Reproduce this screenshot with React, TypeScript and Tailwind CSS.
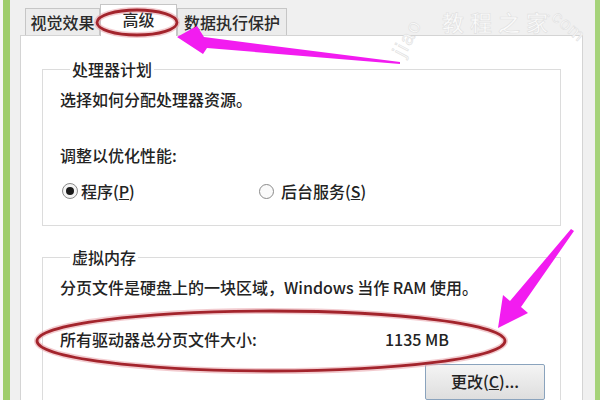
export default function App() {
  return (
    <div className="relative w-[600px] h-[400px] overflow-hidden bg-[#f0f0f0] flex font-['Noto_Sans_CJK_SC',sans-serif] font-medium text-[16px] leading-[20px] text-[#232323]">
      <div className="w-[3px] bg-[#f6f6f6]" />
      <div className="w-[7px] bg-[#9fcd6b]" />
      <div className="flex-1 flex flex-col pl-[10px] pr-[12px] pt-[4px] min-w-0">
        {/* tabs */}
        <div className="h-[32px] flex items-end pl-[5px] relative z-10">
          <div className="w-[75px] h-[27px] border border-b-0 border-[#c6c6c6] bg-[#ececec] flex items-center justify-center text-[#2a2a2a]">
            视觉效果
          </div>
          <div className="w-[77px] h-[32px] -mb-px border border-b-0 border-[#c6c6c6] bg-white flex items-center justify-center pb-[4px] text-[#2a2a2a]">
            高级
          </div>
          <div className="w-[110px] h-[27px] border border-b-0 border-[#c6c6c6] bg-[#ececec] flex items-center justify-center text-[#2a2a2a]">
            数据执行保护
          </div>
        </div>
        {/* panel */}
        <div className="flex-1 bg-white border border-b-0 border-[#d4d4d4] px-[21px] flex flex-col">
          <fieldset className="mt-[23px] border border-[#dcdcdc] px-[17px] pb-[24px]">
            <legend className="ml-[10px] px-[2px]">处理器计划</legend>
            <div className="mt-[10px]">选择如何分配处理器资源。</div>
            <div className="mt-[36px]">调整以优化性能:</div>
            <div className="mt-[16px] flex items-center">
              <div className="w-[199px] flex items-center pl-[2px]">
                <div className="w-[16px] h-[16px] rounded-full border border-[#8a8a8a] bg-[#f4f4f4] flex items-center justify-center">
                  <div className="w-[8px] h-[8px] rounded-full bg-[#1a1a1a]" />
                </div>
                <span className="ml-[3px]">
                  程序(<span className="underline">P</span>)
                </span>
              </div>
              <div className="flex items-center">
                <div className="w-[15px] h-[15px] rounded-full border border-[#8a8a8a] bg-[#fafafa]" />
                <span className="ml-[7px]">
                  后台服务(<span className="underline">S</span>)
                </span>
              </div>
            </div>
          </fieldset>
          <fieldset className="mt-[21px] border border-b-0 border-[#dcdcdc] px-[17px] pb-[10px]">
            <legend className="ml-[10px] px-[2px]">虚拟内存</legend>
            <div className="mt-[10px] whitespace-nowrap">分页文件是硬盘上的一块区域，Windows 当作 RAM 使用。</div>
            <div className="mt-[32px] flex whitespace-nowrap">
              <div className="w-[325px]">所有驱动器总分页文件大小:</div>
              <div>1135 MB</div>
            </div>
            <div className="mt-[15px] flex justify-end -mr-[2px]">
              <div className="w-[120px] h-[36px] border border-[#8aa3bd] rounded-[2px] bg-gradient-to-b from-[#f4f4f4] to-[#dedede] flex items-center justify-center pb-[2px]">
                更改(<span className="underline">C</span>)...
              </div>
            </div>
          </fieldset>
        </div>
      </div>
      <div className="w-[5px] bg-[#a6d37a]" />

      {/* annotations */}
      <svg className="absolute inset-0 pointer-events-none z-20" width="600" height="400" viewBox="0 0 600 400">
        <text transform="translate(404 58) rotate(-62)" fontFamily="Liberation Sans, sans-serif" fontSize="20" fill="#fbfbfb" stroke="#e0e0e0" strokeWidth="0.6" letterSpacing="2">
          jiao
        </text>
        <text transform="translate(546 15) rotate(40)" fontFamily="Liberation Sans, sans-serif" fontSize="18" fill="#fbfbfb" stroke="#e0e0e0" strokeWidth="0.6" letterSpacing="1">
          .com
        </text>
        <text x="442" y="31" fontFamily="Noto Sans CJK SC, sans-serif" fontSize="22" fill="#fbfbfb" stroke="#e0e0e0" strokeWidth="0.6" letterSpacing="6">
          教程之家
        </text>

        <ellipse cx="137" cy="22.5" rx="40" ry="12.5" fill="none" stroke="#e8a0a8" strokeOpacity="0.55" strokeWidth="6" />
        <ellipse cx="137" cy="22.5" rx="40" ry="12.5" fill="none" stroke="#a3242c" strokeWidth="2.8" />
        <ellipse cx="271" cy="341" rx="234" ry="30" fill="none" stroke="#e8a0a8" strokeOpacity="0.55" strokeWidth="6" />
        <ellipse cx="271" cy="341" rx="234" ry="30" fill="none" stroke="#a3242c" strokeWidth="2.8" />

        <polygon points="177,37 197,26 204,37 400,62 400,64 207,48 203,54" fill="#f21cf0" />
        <polygon points="498,328 503,295 510,301 571,229 574,231 521,307 528,313" fill="#f21cf0" />
      </svg>
    </div>
  );
}
